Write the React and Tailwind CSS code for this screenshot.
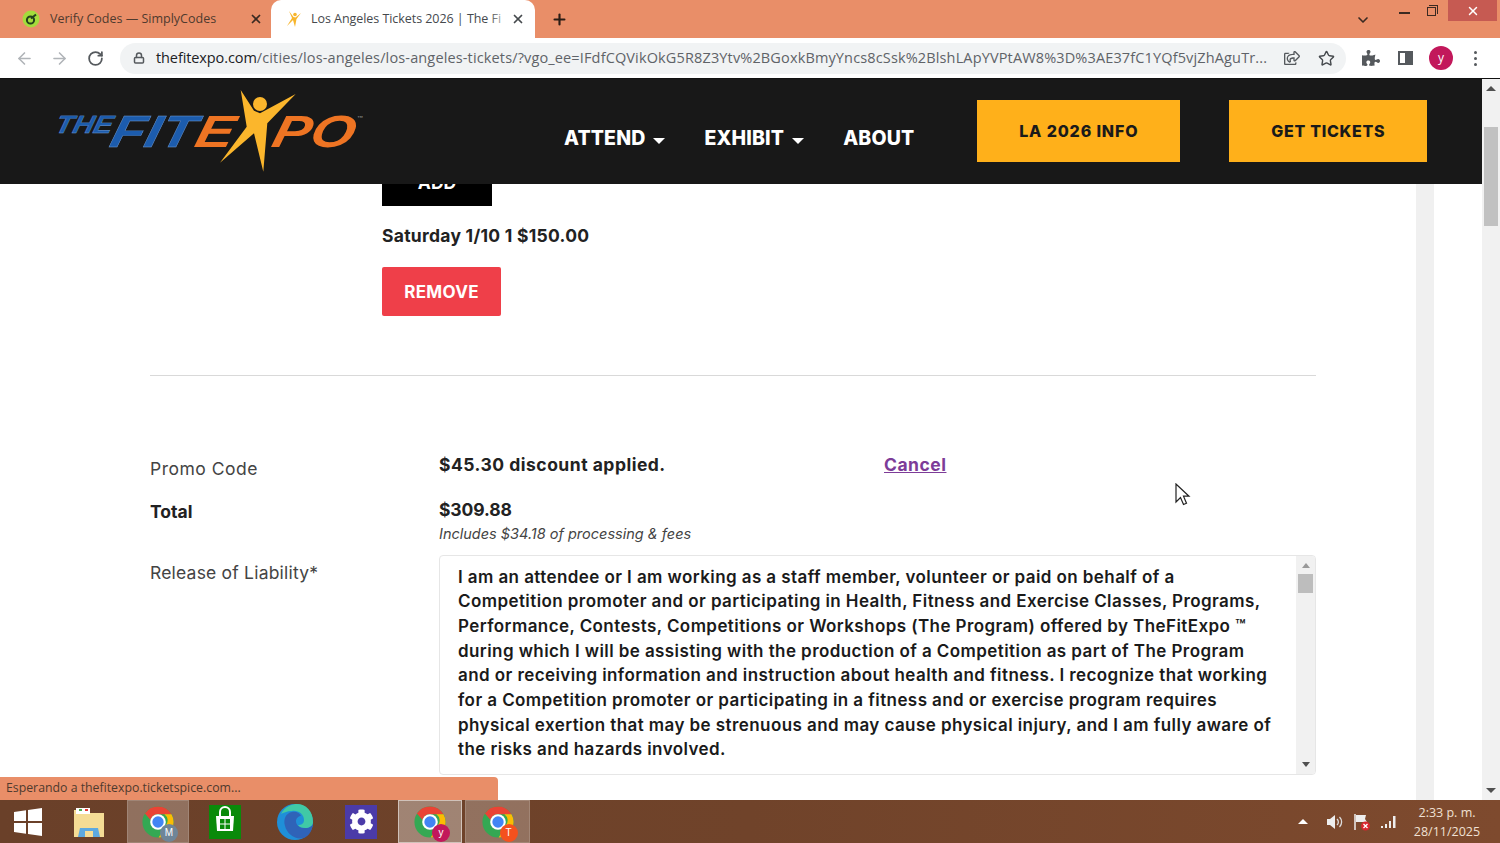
import React from "react";
import { ArrowLeft, ArrowRight, RotateCw, Plus, X, Lock, ChevronDown, Star } from "lucide-react";
import { FaPuzzlePiece, FaRegShareSquare, FaCog } from "react-icons/fa";

function Chrome({ badge, badgeColor }) {
  return (
    <div className="relative w-[34px] h-[34px]">
      <svg viewBox="0 0 48 48" width="34" height="34">
        <circle cx="24" cy="24" r="22" fill="#34a853" />
        <path d="M24 2a22 22 0 0 1 19 11H24a11 11 0 0 0-10.5 8L5.5 12A22 22 0 0 1 24 2z" fill="#ea4335" />
        <path d="M43 13a22 22 0 0 1-18 33l10-17a11 11 0 0 0-2-16z" fill="#fbbc04" />
        <circle cx="24" cy="24" r="11" fill="#fff" />
        <circle cx="24" cy="24" r="8" fill="#4285f4" />
      </svg>
      <div className="absolute -right-[3px] -bottom-[3px] w-[18px] h-[18px] rounded-full flex items-center justify-center text-[10px] text-white [font-family:'Liberation_Sans',sans-serif]" style={{ background: badgeColor }}>{badge}</div>
    </div>
  );
}

function TabBar() {
  return (
    <div className="h-[38px] bg-[#e98e68] flex items-end pl-[8px] shrink-0 [font-family:'Open_Sans',sans-serif]">
      <div className="w-[263px] h-[38px] flex items-center pl-[14px] text-[12.5px] text-[#4f3a2e]">
        <svg width="18" height="18" viewBox="0 0 18 18" className="shrink-0"><circle cx="9" cy="9" r="8.5" fill="#a4dc3c" /><circle cx="8.5" cy="10" r="3.6" fill="none" stroke="#24421c" strokeWidth="2" /><path d="M9 8.5l5-4" stroke="#24421c" strokeWidth="2" /></svg>
        <span className="ml-[10px] w-[199px] whitespace-nowrap">Verify Codes — SimplyCodes</span>
        <X size={14} strokeWidth={3} className="text-[#3a2a22]" />
      </div>
      <div className="w-[264px] h-[38px] bg-white rounded-t-[10px] flex items-center pl-[14px] text-[12.5px] text-[#45494d]">
        <svg width="18" height="18" viewBox="0 0 18 18" className="shrink-0"><path d="M4 1l4.5 6 2 .5L16 3l-4.5 6L10 17 8 10l-6 6 5-8z" fill="#f7b52b" /><circle cx="10" cy="4.500" r="1.800" fill="#f7b52b" /></svg>
        <div className="ml-[8px] w-[200px] relative whitespace-nowrap tracking-[-0.05px]">
          Los Angeles Tickets 2026 | The Fi
          <div className="absolute right-0 top-0 bottom-0 w-[22px] bg-gradient-to-r from-transparent to-white" />
        </div>
        <X size={14} strokeWidth={3} className="text-[#45494d]" />
      </div>
      <div className="h-[38px] flex items-center ml-[16px]"><Plus size={17} strokeWidth={3} className="text-[#2a1c15]" /></div>
      <div className="flex-1" />
      <div className="h-[38px] flex items-center"><ChevronDown size={16} strokeWidth={2.500} className="text-[#3a2a22] mt-[2px]" /></div>
      <div className="w-[129px] h-[38px] flex items-start pl-[28px]">
        <div className="w-[11px] h-[2px] bg-[#3a2a22] mt-[12px]" />
        <div className="relative w-[11px] h-[11px] ml-[17px] mt-[5px]">
          <div className="absolute left-0 top-[2px] w-[9px] h-[9px] border border-[#3a2a22]" />
          <div className="absolute right-0 top-0 w-[9px] h-[9px] border-t border-r border-[#3a2a22]" />
        </div>
        <div className="w-[49px] h-[21px] ml-[10px] bg-[#c65a52] flex items-center justify-center"><X size={14} strokeWidth={2.500} className="text-white" /></div>
      </div>
    </div>
  );
}

function Toolbar() {
  return (
    <div className="h-[41px] bg-white flex items-center shrink-0 border-b border-[#111] relative [font-family:'Open_Sans',sans-serif]">
      <ArrowLeft size={19} strokeWidth={2} className="ml-[15px] text-[#b0b4b8]" />
      <ArrowRight size={19} strokeWidth={2} className="ml-[16px] text-[#b0b4b8]" />
      <RotateCw size={17} strokeWidth={2.500} className="ml-[18px] text-[#55595d]" />
      <div className="ml-[16px] w-[1226px] h-[31px] rounded-full bg-[#f1f3f4] flex items-center pl-[13px] text-[14.5px] tracking-[-0.1px]">
        <Lock size={12} strokeWidth={3} className="text-[#55595d] shrink-0" />
        <div className="ml-[11px] w-[1112px] whitespace-nowrap"><span className="text-[#202124]">thefitexpo.com</span><span className="text-[#5f6368] tracking-[0.14px]">/cities/los-angeles/los-angeles-tickets/?vgo_ee=IFdfCQVikOkG5R8Z3Ytv%2BGoxkBmyYncs8cSsk%2BlshLApYVPtAW8%3D%3AE37fC1YQf5vjZhAguTr...</span></div>
        <FaRegShareSquare size={16} className="ml-[16px] text-[#55595d]" />
        <Star size={17} strokeWidth={2} className="ml-[18px] text-[#45494d]" />
      </div>
      <FaPuzzlePiece size={18} className="ml-[16px] text-[#55595d]" />
      <div className="ml-[18px] w-[15px] h-[14px] border-2 border-[#55595d] flex justify-end"><div className="w-[6px] bg-[#55595d]" /></div>
      <div className="ml-[16px] w-[24px] h-[24px] rounded-full bg-[#c2185b] text-white text-[12px] flex items-center justify-center">y</div>
      <div className="ml-[21px] flex flex-col gap-[3px]"><div className="w-[3px] h-[3px] rounded-full bg-[#55595d]" /><div className="w-[3px] h-[3px] rounded-full bg-[#55595d]" /><div className="w-[3px] h-[3px] rounded-full bg-[#55595d]" /></div>
    </div>
  );
}

function Logo() {
  return (
    <svg width="320" height="92" viewBox="50 85 320 92" className="shrink-0">
      <g fontFamily="'Liberation Sans',sans-serif" fontStyle="italic" fontWeight="700">
        <text transform="translate(54 133) skewX(-14)" fontSize="25" textLength="57" lengthAdjust="spacingAndGlyphs" fill="#1c5cad" stroke="#6f9ad3" strokeWidth="0.400">THE</text>
        <text transform="translate(108 147) skewX(-14)" fontSize="45" textLength="84" lengthAdjust="spacingAndGlyphs" fill="#1c5cad" stroke="#6f9ad3" strokeWidth="0.400">FIT</text>
        <text transform="translate(193 147) skewX(-14)" fontSize="45" textLength="38" lengthAdjust="spacingAndGlyphs" fill="#ee7423">E</text>
        <text transform="translate(270 147) skewX(-14)" fontSize="45" textLength="82" lengthAdjust="spacingAndGlyphs" fill="#ee7423">PO</text>
        <text x="357" y="120" fontSize="6" fill="#888">™</text>
      </g>
      <polygon points="240.7,90 254,110.700 260,113.300 295.700,94 267.300,123.300 263.300,171.700 254,133.300 220,162.700 246.700,126.700" fill="#fbb62c" />
      <circle cx="260" cy="104" r="7" fill="#fbb62c" />
    </svg>
  );
}

function Caret() {
  return <span className="ml-[8px] w-0 h-0 border-x-[6px] border-x-transparent border-t-[6px] border-t-white mt-[4px]" />;
}

function Header() {
  return (
    <div className="h-[105px] bg-[#181818] flex items-start relative z-10 shrink-0 pl-[50px] [font-family:Inter,sans-serif]">
      <div className="mt-[6px]"><Logo /></div>
      <div className="flex items-center text-white font-extrabold text-[19.5px] tracking-[0.15px] ml-[194px] mt-[46px] h-[27px]">
        <span>ATTEND</span><Caret />
        <span className="ml-[39px]">EXHIBIT</span><Caret />
        <span className="ml-[39px]">ABOUT</span>
      </div>
      <div className="ml-[63px] mt-[21px] w-[203px] h-[62px] bg-[#ffb01a] flex items-center justify-center font-extrabold text-[16px] tracking-[0.85px] text-[#1a1a1a]">LA 2026 INFO</div>
      <div className="ml-[49px] mt-[21px] w-[198px] h-[62px] bg-[#ffb01a] flex items-center justify-center font-extrabold text-[16px] tracking-[0.7px] text-[#1a1a1a]">GET TICKETS</div>
    </div>
  );
}

const LINES = [
  "I am an attendee or I am working as a staff member, volunteer or paid on behalf of a",
  "Competition promoter and or participating in Health, Fitness and Exercise Classes, Programs,",
  "Performance, Contests, Competitions or Workshops (The Program) offered by TheFitExpo ™",
  "during which I will be assisting with the production of a Competition as part of The Program",
  "and or receiving information and instruction about health and fitness. I recognize that working",
  "for a Competition promoter or participating in a fitness and or exercise program requires",
  "physical exertion that may be strenuous and may cause physical injury, and I am fully aware of",
  "the risks and hazards involved.",
];

function Release() {
  return (
    <div className="w-[877px] h-[220px] border border-[#e6e6e6] rounded-[4px] flex overflow-hidden">
      <div className="flex-1 pl-[18px] pt-[8.5px] text-[17px] leading-[24.7px] font-semibold tracking-[0.42px] text-[#1a1a1a] whitespace-nowrap">
        {LINES.map((l) => <div key={l}>{l}</div>)}
      </div>
      <div className="w-[19px] bg-[#f1f1f1] flex flex-col items-center">
        <div className="w-0 h-0 border-x-[4px] border-x-transparent border-b-[5px] border-b-[#999] mt-[7px]" />
        <div className="w-[15px] h-[19px] bg-[#bdbdbd] mt-[6px]" />
        <div className="flex-1" />
        <div className="w-0 h-0 border-x-[4px] border-x-transparent border-t-[5px] border-t-[#505050] mb-[7px]" />
      </div>
    </div>
  );
}

function Page() {
  return (
    <div className="flex-1 flex min-h-0">
      <div className="w-[1482px] flex flex-col relative">
        <Header />
        <div className="flex-1 flex min-h-0 [font-family:Inter,sans-serif]">
          <div className="w-[1166px] ml-[150px]">
            <div className="ml-[232px] -mt-[26px] w-[110px] h-[48px] pt-[2px] bg-black flex items-center justify-center text-white font-bold text-[17.5px] relative">ADD</div>
            <div className="ml-[232px] mt-[18px] font-bold text-[17.5px] leading-[24px] text-[#222] tracking-[0.27px]">Saturday 1/10 1 $150.00</div>
            <div className="ml-[232px] mt-[19px] w-[119px] h-[49px] pt-[2px] rounded-[2px] bg-[#ef3f49] flex items-center justify-center text-white font-bold text-[17px] tracking-[0.3px]">REMOVE</div>
            <div className="mt-[59px] h-px bg-[#d9d9d9]" />
            <div className="mt-[77px] grid grid-cols-[289px_1fr] text-[#222]">
              <div className="text-[17.5px] leading-[24px] text-[#444] pt-[4px] tracking-[0.5px]">Promo Code</div>
              <div className="flex font-bold text-[17.5px] leading-[24px] tracking-[0.5px]">
                <span className="w-[445px]">$45.30 discount applied.</span>
                <span className="text-[#7d3c98] underline">Cancel</span>
              </div>
              <div className="text-[17.5px] leading-[24px] font-bold mt-[19px]">Total</div>
              <div className="mt-[17px]">
                <div className="font-bold text-[17.5px] leading-[24px] tracking-[-0.1px]">$309.88</div>
                <div className="italic text-[14.5px] leading-[24px] text-[#444]">Includes $34.18 of processing &amp; fees</div>
              </div>
              <div className="text-[17.5px] leading-[24px] text-[#444] mt-[15px] tracking-[0.2px]">Release of Liability*</div>
              <div className="mt-[9px]"><Release /></div>
            </div>
          </div>
          <div className="w-[18px] ml-[100px] bg-[#f0f0f0]" />
        </div>
        <div className="absolute left-0 bottom-0 w-[498px] h-[23px] bg-[#e98e68] rounded-tr-[4px] pl-[6px] flex items-center text-[12.3px] text-[#4f3a2e] z-20 [font-family:'Open_Sans',sans-serif]">Esperando a thefitexpo.ticketspice.com...</div>
        <svg width="16" height="24" viewBox="0 0 16 24" className="absolute left-[1175px] top-[404px] z-20"><path d="M1 1v18l4.500-4.500 3 7 3-1.300-3-7H14z" fill="#fff" stroke="#222" strokeWidth="1.200" /></svg>
      </div>
      <div className="w-[18px] bg-[#f1f1f1] flex flex-col items-center">
        <div className="w-0 h-0 border-x-[5px] border-x-transparent border-b-[5px] border-b-[#505050] mt-[7px]" />
        <div className="w-[14px] h-[99px] bg-[#c1c1c1] mt-[36px]" />
        <div className="flex-1" />
        <div className="w-0 h-0 border-x-[5px] border-x-transparent border-t-[5px] border-t-[#505050] mb-[7px]" />
      </div>
    </div>
  );
}

function Tile({ active, className, children }) {
  return <div className={`h-[43px] flex items-center justify-center ${className} ${active === 2 ? "bg-white/35 border border-white/50" : active === 1 ? "bg-white/25 border border-white/15" : ""}`}>{children}</div>;
}

function Taskbar() {
  return (
    <div className="h-[43px] shrink-0 flex items-center bg-gradient-to-r from-[#6a4029] via-[#70432a] to-[#7e4a2e] text-[#f0e0d4] [font-family:'Open_Sans',sans-serif]">
      <svg width="30" height="30" viewBox="0 0 30 30" className="ml-[13px] shrink-0"><path d="M1 5l12-1.700V14H1zM15 3l14-2v13H15zM1 16h12v10.700L1 25zM15 16h14v13l-14-2z" fill="#fff" /></svg>
      <svg width="36" height="34" viewBox="0 0 36 34" className="ml-[28px] shrink-0">
        <path d="M3 5h11l3 3h16v24H3z" fill="#f5dc95" />
        <rect x="5" y="3" width="14" height="6" fill="#fff" /><rect x="8" y="4" width="3" height="2" fill="#4caf50" /><rect x="14" y="4" width="3" height="2" fill="#e53935" />
        <path d="M9 23h18l2 9H7z" fill="#5da9e0" /><rect x="14" y="26" width="8" height="6" fill="#f5dc95" />
      </svg>
      <Tile active={1} className="w-[62px] ml-[20px]"><Chrome badge="M" badgeColor="#6f8598" /></Tile>
      <svg width="32" height="34" viewBox="0 0 32 34" className="ml-[20px] shrink-0">
        <rect width="32" height="34" fill="#0a8a0a" />
        <path d="M7 11h18l-1 15H8z" fill="#fff" /><path d="M11 11V7a5 5 0 0 1 10 0v4" fill="none" stroke="#fff" strokeWidth="2" />
        <path d="M11 14h4.500v4.500H11zM16.500 14H21v4.500h-4.500zM11 19.500h4.500V24H11zM16.500 19.500H21V24h-4.500z" fill="#0a8a0a" />
      </svg>
      <svg width="36" height="36" viewBox="0 0 36 36" className="ml-[36px] shrink-0">
        <circle cx="18" cy="18" r="18" fill="#1f8fd8" />
        <path d="M36 18c0 4-4 6-8 6-6 0-9-3-9-7 0-3 3-5 5-5-1-3-5-5-9-4C9 9 6 15 8 22c2 8 10 14 19 12 5-2 9-8 9-16z" fill="#2f63b8" />
        <path d="M4 10C8 2 16 0 20 0c9 0 16 7 16 18 0 4-4 6-8 6-3 0-6-1-7-3 3 0 6-1 6-5 0-6-6-10-12-9-5 0-9 2-11 3z" fill="#40c9a6" />
      </svg>
      <div className="ml-[32px] w-[32px] h-[34px] bg-[#4b3ba8] flex items-center justify-center shrink-0"><FaCog size={25} className="text-white" /></div>
      <Tile active={2} className="w-[64px] ml-[21px]"><Chrome badge="y" badgeColor="#c2185b" /></Tile>
      <Tile active={1} className="w-[65px] ml-[3px]"><Chrome badge="T" badgeColor="#f4511e" /></Tile>
      <div className="flex-1" />
      <div className="w-0 h-0 border-x-[5px] border-x-transparent border-b-[5px] border-b-white mr-[18px]" />
      <svg width="18" height="16" viewBox="0 0 18 16" className="mr-[9px]"><path d="M1 5h3l5-4v14l-5-4H1z" fill="#eee" /><path d="M11 5a4 4 0 0 1 0 6M13.500 3a7 7 0 0 1 0 10" fill="none" stroke="#ddd" strokeWidth="1.300" /></svg>
      <svg width="18" height="18" viewBox="0 0 18 18" className="mr-[9px]"><path d="M2 1v16" stroke="#eee" strokeWidth="1.500" /><path d="M3 2h10l-1 4 2 3H3z" fill="#eee" /><circle cx="12.500" cy="13" r="4.500" fill="#d9262e" /><path d="M10.500 11l4 4M14.500 11l-4 4" stroke="#fff" strokeWidth="1.300" /></svg>
      <svg width="17" height="14" viewBox="0 0 17 14" className="mr-[8px]"><path d="M1 11h2v2H1zM5 9h2v4H5zM9 6h2v7H9zM13 1h2.500v12H13z" fill="#eee" /></svg>
      <div className="w-[84px] mr-[11px] text-center text-[12.5px] leading-[19px]"><div>2:33 p. m.</div><div>28/11/2025</div></div>
    </div>
  );
}

export default function App() {
  return (
    <div className="w-[1500px] h-[843px] overflow-hidden flex flex-col bg-white">
      <TabBar />
      <Toolbar />
      <Page />
      <Taskbar />
    </div>
  );
}
